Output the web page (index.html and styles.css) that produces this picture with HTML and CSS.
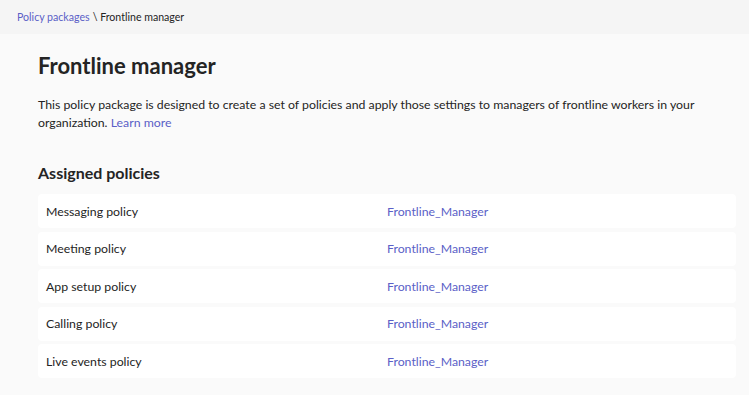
FILE: index.html
```html
<!DOCTYPE html>
<html lang="en">
<head>
  <meta charset="UTF-8" />
  <title>Frontline manager</title>
  <link rel="stylesheet" href="styles.css">
</head>
<body>

<!-- Breadcrumb -->
<div class="crumbs">
  <a href="#">Policy packages</a> \ Frontline manager
</div>

<main>
  <h1>Frontline manager</h1>
  <p class="desc">
    This policy package is designed to create a set of policies and apply those settings to managers of frontline workers in your
    organization. <a href="#">Learn more</a>
  </p>

  <h2>Assigned policies</h2>
  <ul class="policies">
    <li><span>Messaging policy</span><a href="#">Frontline_Manager</a></li>
    <li><span>Meeting policy</span><a href="#">Frontline_Manager</a></li>
    <li><span>App setup policy</span><a href="#">Frontline_Manager</a></li>
    <li><span>Calling policy</span><a href="#">Frontline_Manager</a></li>
    <li><span>Live events policy</span><a href="#">Frontline_Manager</a></li>
  </ul>
</main>

</body>
</html>
```

FILE: styles.css
```css
* { margin: 0; padding: 0; box-sizing: border-box; }
body {
  font-family: Lato, sans-serif;
  background: #fafafa;
  color: #242424;
  font-size: 12.3px;
}

a {
  color: #5b5fc7;
  text-decoration: none;
}

.crumbs {
  background: #f5f5f5;
  height: 34px;
  padding: 0 17px;
  display: flex;
  align-items: center;
  gap: 3px;
  font-size: 10.6px;
}

main {
  padding: 18px 13px 0 38px;
}

h1 {
  font-size: 22px;
  font-weight: 700;
  line-height: 28px;
}

.desc {
  margin-top: 16px;
  line-height: 18px;
  padding-right: 10px;
}

h2 {
  margin-top: 31px;
  font-size: 16px;
  font-weight: 700;
  line-height: 20px;
}

.policies {
  list-style: none;
  margin-top: 11px;
  display: flex;
  flex-direction: column;
  gap: 3.5px;
}

.policies li {
  background: #fff;
  border-radius: 4px;
  height: 34px;
  padding: 0 8px;
  display: grid;
  grid-template-columns: 1fr 1fr;
  align-items: center;
}
```
